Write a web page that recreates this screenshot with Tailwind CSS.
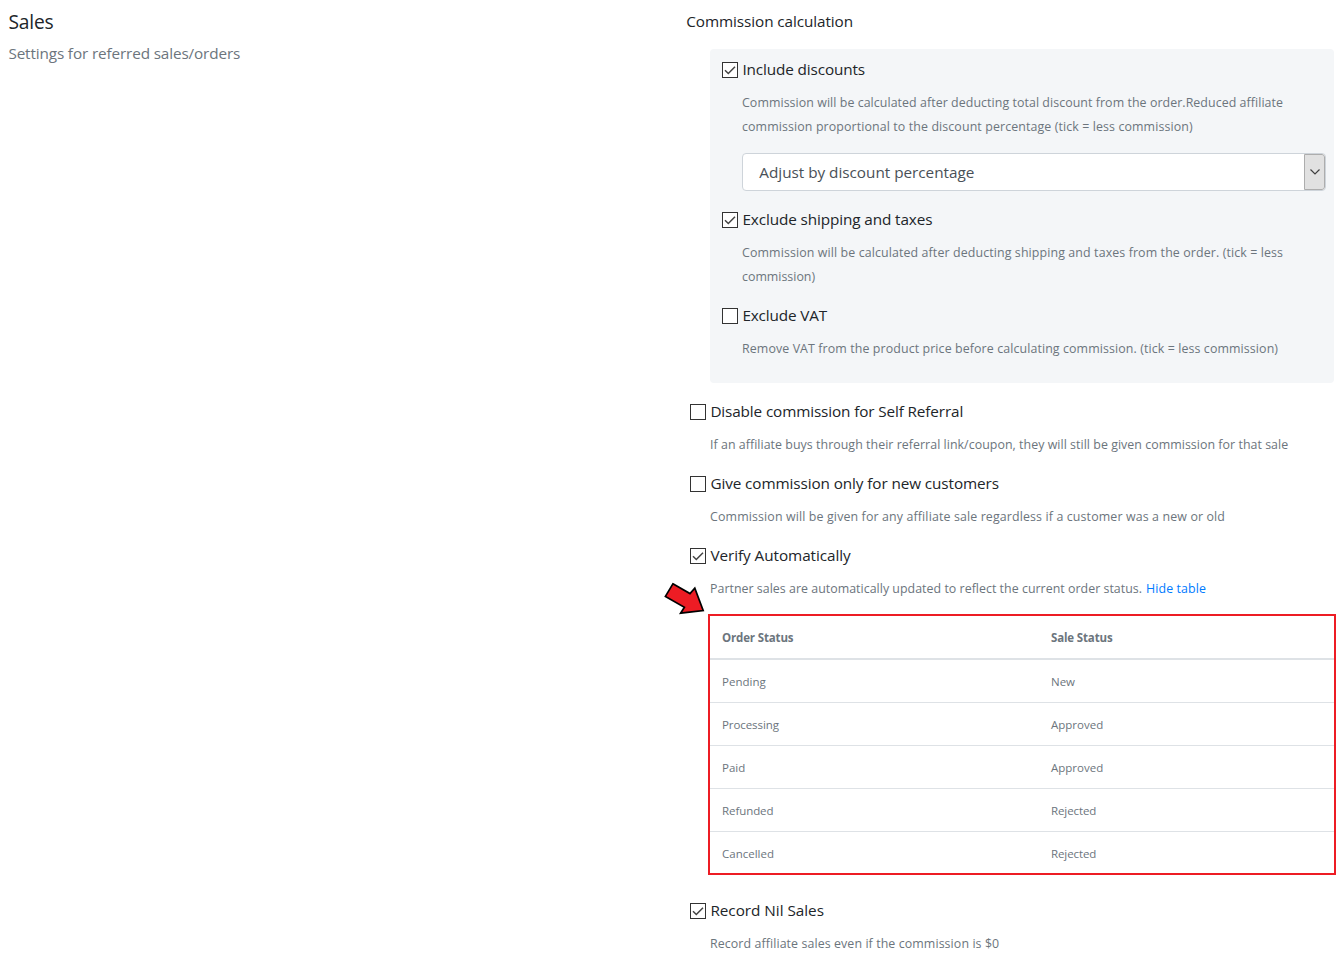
<!DOCTYPE html>
<html lang="en">
<head>
<meta charset="utf-8">
<title>Sales settings</title>
<script src="https://cdn.jsdelivr.net/npm/@tailwindcss/browser@4"></script>
</head>
<body class="bg-white font-['Open_Sans','Noto_Sans',sans-serif] text-[15.3px] leading-6 text-[#212529]">
<svg class="hidden">
  <symbol id="tick" viewBox="0 0 16 16"><rect x=".5" y=".5" width="15" height="15" fill="#fff" stroke="#333"/><path d="M3 8.3 6.3 11.5 13 4.8" fill="none" stroke="#444" stroke-width="1.5"/></symbol>
  <symbol id="box" viewBox="0 0 16 16"><rect x=".5" y=".5" width="15" height="15" fill="#fff" stroke="#333"/></symbol>
</svg>
<main class="flex h-[961px] w-[1342px] overflow-hidden whitespace-nowrap">
  <section class="w-[678px] pl-[8.4px] pt-2">
    <h1 class="text-[19.2px] leading-7 tracking-[-0.15px]">Sales</h1>
    <p class="mt-[5px] tracking-[-0.135px] text-[#6c757d]">Settings for referred sales/orders</p>
  </section>

  <section class="w-[664px] pl-2 pr-2 pt-[9px]">
    <h2 class="pl-[0.3px] tracking-[-0.09px]">Commission calculation</h2>

    <div class="ml-6 mt-4 h-[334px] rounded bg-[#f4f6f8] pl-3 pr-2 pt-2">
      <label class="flex items-center gap-[4.4px]"><svg class="mt-0.5 size-4"><use href="#tick"/></svg><span class="tracking-[-0.12px]">Include discounts</span></label>
      <p class="ml-5 mt-[10px] text-[12.4px] text-[#6c757d]"><span class="tracking-[0.062px]">Commission will be calculated after deducting total discount from the order.Reduced affiliate</span><br><span class="tracking-[0.11px]">commission proportional to the discount percentage (tick = less commission)</span></p>
      <div class="ml-5 mt-[14px] flex h-[38px] overflow-hidden rounded border border-[#ced4da] bg-white text-[#495057]">
        <span class="flex-1 pl-[16.3px] leading-[37px] tracking-[-0.02px]">Adjust by discount percentage</span>
        <span class="flex w-[21px] items-center justify-center rounded-r-[3px] border border-[#adadad] bg-[#e1e1e1]"><svg class="size-[12px]" viewBox="0 0 12 12"><path d="M1.5 3.5 6 8 10.5 3.5" fill="none" stroke="#404040" stroke-width="1.2"/></svg></span>
      </div>
      <label class="mt-4 flex items-center gap-[4.4px]"><svg class="mt-0.5 size-4"><use href="#tick"/></svg><span class="tracking-[-0.11px]">Exclude shipping and taxes</span></label>
      <p class="ml-5 mt-[10px] text-[12.4px] text-[#6c757d]"><span class="tracking-[0.114px]">Commission will be calculated after deducting shipping and taxes from the order. (tick = less</span><br>commission)</p>
      <label class="mt-[14px] flex items-center gap-[4.4px]"><svg class="mt-0.5 size-4"><use href="#box"/></svg><span class="tracking-[-0.15px]">Exclude VAT</span></label>
      <p class="ml-5 mt-[10px] text-[12.4px] tracking-[0.105px] text-[#6c757d]">Remove VAT from the product price before calculating commission. (tick = less commission)</p>
    </div>

    <div class="pl-1">
      <label class="mt-4 flex items-center gap-[4.4px]"><svg class="mt-0.5 size-4"><use href="#box"/></svg><span class="tracking-[-0.13px]">Disable commission for Self Referral</span></label>
      <p class="ml-5 mt-[10px] text-[12.4px] tracking-[0.042px] text-[#6c757d]">If an affiliate buys through their referral link/coupon, they will still be given commission for that sale</p>
      <label class="mt-[14px] flex items-center gap-[4.4px]"><svg class="mt-0.5 size-4"><use href="#box"/></svg><span class="tracking-[-0.1px]">Give commission only for new customers</span></label>
      <p class="ml-5 mt-[10px] text-[12.4px] tracking-[0.132px] text-[#6c757d]">Commission will be given for any affiliate sale regardless if a customer was a new or old</p>
      <label class="mt-[14px] flex items-center gap-[4.4px]"><svg class="mt-0.5 size-4"><use href="#tick"/></svg><span class="tracking-[-0.06px]">Verify Automatically</span></label>
      <p class="ml-5 mt-[10px] flex gap-1 text-[12.4px] text-[#6c757d]"><span class="tracking-[0.026px]">Partner sales are automatically updated to reflect the current order status.</span><a class="tracking-[0.1px] text-[#007bff]">Hide table</a></p>
    </div>

    <div class="relative ml-[22px] mr-[-2px] mt-[13px] h-[261px] border-2 border-[#ed1c24]">
      <svg class="absolute left-[-50px] top-[-36px] h-[38px] w-[46px]" viewBox="0 0 46 38"><path d="M12.9 3.8 30 13.6 34.8 8.2 43.2 30.5 20.6 33.2 24.4 27.2 5.4 16.4Z" fill="#ed1c24" stroke="#000" stroke-width="1.7"/></svg>
      <table class="w-full text-left text-[11.5px] text-[#6c757d]">
        <thead><tr class="h-[43px] border-b-2 border-[#dee2e6]"><th class="w-[329px] pl-3 pt-px font-bold tracking-[-0.15px]">Order Status</th><th class="pl-3 pt-px font-bold tracking-[-0.15px]">Sale Status</th></tr></thead>
        <tbody>
          <tr class="h-[43px] border-b border-[#dee2e6]"><td class="pl-3 pt-0.5 tracking-[0.02px]">Pending</td><td class="pl-3 pt-0.5">New</td></tr>
          <tr class="h-[43px] border-b border-[#dee2e6]"><td class="pl-3 pt-0.5 tracking-[-0.08px]">Processing</td><td class="pl-3 pt-0.5">Approved</td></tr>
          <tr class="h-[43px] border-b border-[#dee2e6]"><td class="pl-3 pt-0.5">Paid</td><td class="pl-3 pt-0.5">Approved</td></tr>
          <tr class="h-[43px] border-b border-[#dee2e6]"><td class="pl-3 pt-0.5 tracking-[-0.08px]">Refunded</td><td class="pl-3 pt-0.5 tracking-[-0.1px]">Rejected</td></tr>
          <tr class="h-[43px]"><td class="pl-3 pt-0.5">Cancelled</td><td class="pl-3 pt-0.5 tracking-[-0.1px]">Rejected</td></tr>
        </tbody>
      </table>
    </div>

    <div class="pl-1">
      <label class="mt-[23px] flex items-center gap-[4.4px]"><svg class="mt-0.5 size-4"><use href="#tick"/></svg><span class="tracking-[-0.03px]">Record Nil Sales</span></label>
      <p class="ml-5 mt-[10px] text-[12.4px] tracking-[0.09px] text-[#6c757d]">Record affiliate sales even if the commission is $0</p>
    </div>
  </section>
</main>
</body>
</html>
